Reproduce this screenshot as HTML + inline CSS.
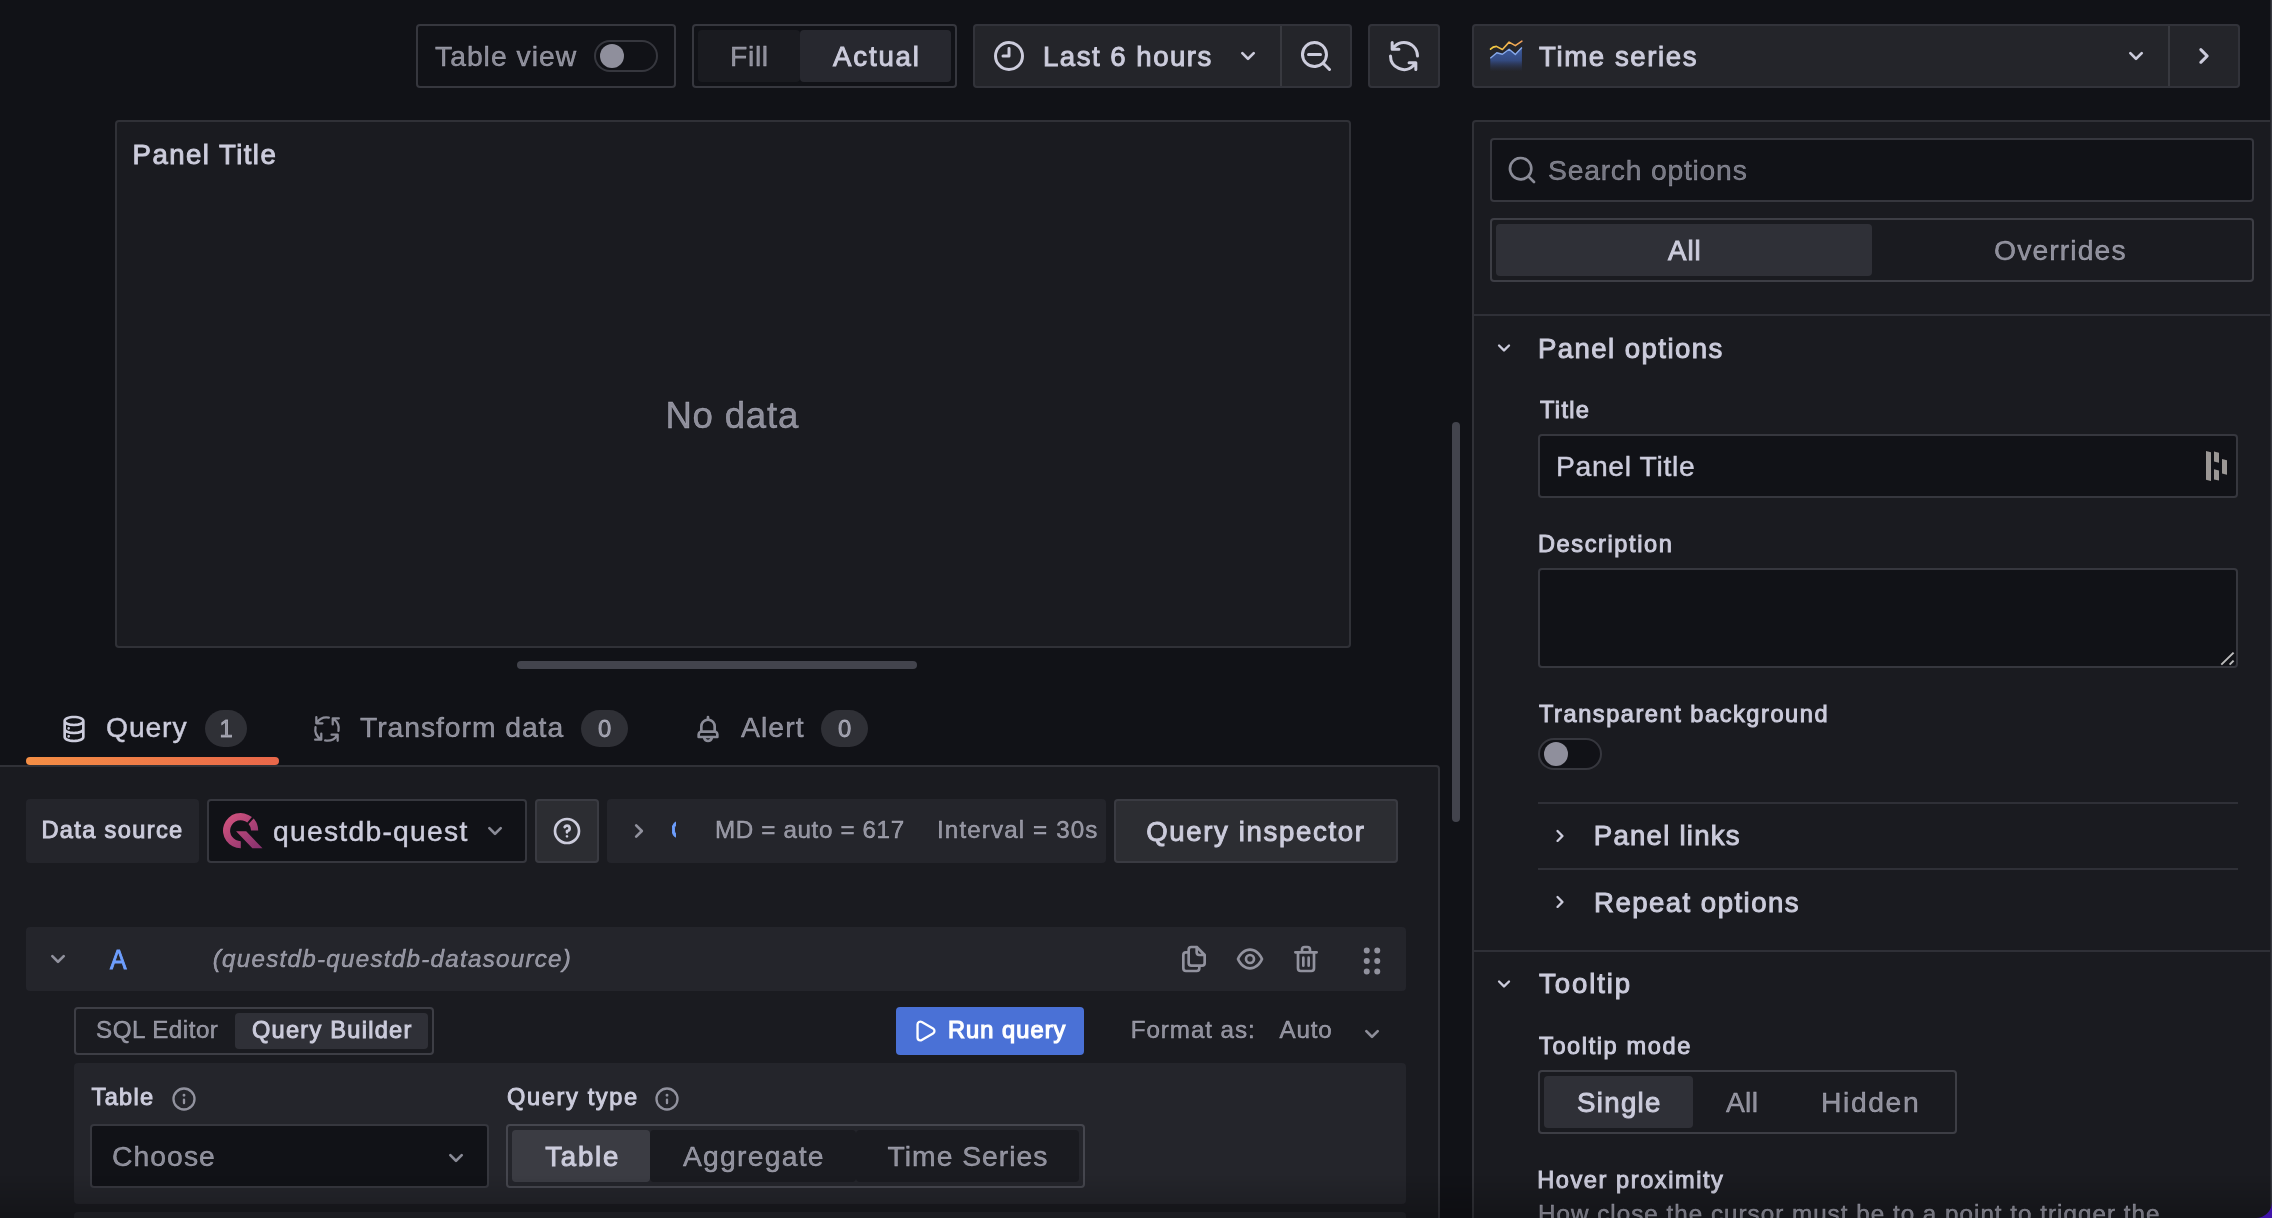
<!DOCTYPE html>
<html lang="en"><head><meta charset="utf-8"><title>Edit panel - Grafana</title>
<style>
*{box-sizing:border-box}
html,body{margin:0;padding:0;background:#111217}
body{width:2272px;height:1218px;overflow:hidden;position:relative;background:#111217;
 font-family:"Liberation Sans",sans-serif;color:#ccccdc}
.b{position:absolute}
.t{position:absolute;line-height:1;white-space:nowrap}
.ic{position:absolute;display:block}
.bd{border:2px solid rgba(204,204,220,0.2);border-radius:4px}
.btn{background:rgba(204,204,220,0.10);border:2px solid rgba(204,204,220,0.09);border-radius:4px}
.inp{background:#111217;border:2px solid rgba(204,204,220,0.2);border-radius:4px}
.sel{background:rgba(204,204,220,0.12);border-radius:4px}
.uns{background:#1a1b20;border-radius:4px}
.sec{background:#24252b;border-radius:4px}
.badge{background:rgba(204,204,220,0.16);border-radius:20px}
.sw{background:#111217;border:2px solid rgba(204,204,220,0.2);border-radius:16px}
.knob{background:#8f8f9c;border-radius:50%}
.hr{background:rgba(204,204,220,0.12)}
</style></head>
<body>
<div class="b bd" style="left:416px;top:24px;width:260px;height:64px;"></div>
<div class="b sw" style="left:594px;top:40px;width:64px;height:32px;"></div>
<div class="b knob" style="left:600px;top:44px;width:24px;height:24px;"></div>
<div class="b bd" style="left:692px;top:24px;width:265px;height:64px;"></div>
<div class="b uns" style="left:698px;top:30px;width:102px;height:52px;"></div>
<div class="b sel" style="left:800px;top:30px;width:151px;height:52px;"></div>
<div class="b btn" style="left:973px;top:24px;width:379px;height:64px;"></div>
<div class="b hr" style="left:1280px;top:26px;width:2px;height:60px;"></div>
<div class="b btn" style="left:1368px;top:24px;width:72px;height:64px;"></div>
<div class="b btn" style="left:1472px;top:24px;width:768px;height:64px;"></div>
<div class="b hr" style="left:2168px;top:26px;width:2px;height:60px;"></div>
<svg class="ic" style="left:1488px;top:38px" width="36" height="36" viewBox="1488 38 36 36">
<defs><linearGradient id="tsa" x1="0" y1="0" x2="0" y2="1"><stop offset="0" stop-color="#3e5ea3"/><stop offset="0.55" stop-color="#33497e"/><stop offset="1" stop-color="#2b3350" stop-opacity="0"/></linearGradient>
<linearGradient id="tsl" x1="0" y1="0" x2="1" y2="0"><stop offset="0" stop-color="#f2cc40"/><stop offset="1" stop-color="#f2a05a"/></linearGradient></defs>
<path d="M1490.3 58.3L1496.8 52.8L1502.4 54.2L1509.1 49.3L1515.3 54.4L1521.9 47.4V71.5H1490.3Z" fill="url(#tsa)"/>
<path d="M1490.3 58.3L1496.8 52.8L1502.4 54.2L1509.1 49.3L1515.3 54.4L1521.9 47.4" fill="none" stroke="#86a8ea" stroke-width="1.4" stroke-linejoin="round"/>
<path d="M1490.5 49.1Q1493 46.6 1496.4 46.4L1502.4 49.5L1509.1 42.1L1515.3 45.6L1521.9 41.1" fill="none" stroke="url(#tsl)" stroke-width="1.6" stroke-linejoin="round" stroke-linecap="round"/>
</svg>
<div class="b " style="left:115px;top:120px;width:1236px;height:528px;background:#1a1b20;border:2px solid rgba(204,204,220,0.13);border-radius:4px"></div>
<div class="b " style="left:517px;top:661px;width:400px;height:8px;background:#43444d;border-radius:4px"></div>
<div class="b " style="left:1452px;top:422px;width:8px;height:400px;background:#43444d;border-radius:4px"></div>
<div class="b " style="left:26px;top:757px;width:253px;height:8px;background:linear-gradient(90deg,#f48e45,#e9674a);border-radius:4px"></div>
<div class="b badge" style="left:205px;top:710px;width:42px;height:37px;"></div>
<div class="b badge" style="left:581px;top:710px;width:47px;height:37px;"></div>
<div class="b badge" style="left:821px;top:710px;width:47px;height:37px;"></div>
<div class="b " style="left:-4px;top:765px;width:1444px;height:535px;background:#1a1b20;border:2px solid rgba(204,204,220,0.13);border-radius:4px"></div>
<div class="b sec" style="left:26px;top:799px;width:173px;height:64px;"></div>
<div class="b inp" style="left:207px;top:799px;width:320px;height:64px;"></div>
<div class="b btn" style="left:535px;top:799px;width:64px;height:64px;"></div>
<div class="b sec" style="left:607px;top:799px;width:499px;height:64px;"></div>
<div class="b btn" style="left:1114px;top:799px;width:284px;height:64px;"></div>
<svg class="ic" style="left:220px;top:810px" width="46" height="42" viewBox="220 810 46 42">
<defs><linearGradient id="qg" x1="0" y1="0" x2="1" y2="1"><stop offset="0" stop-color="#d8567f"/><stop offset="1" stop-color="#85306e"/></linearGradient></defs>
<path fill="url(#qg)" d="M240.8 848.2A17.6 17.6 0 1 1 251.9 817.1L247.3 822.6A10.5 10.5 0 1 0 240.8 841.2ZM253.6 818.6A17.6 17.6 0 0 1 258.2 830.6H251.1A10.5 10.5 0 0 0 248.6 823.9ZM236.1 831.3H246.2L262.5 848.2H252.4Z"/>
</svg>
<div class="b sec" style="left:26px;top:927px;width:1380px;height:64px;"></div>
<div class="b bd" style="left:74px;top:1007px;width:360px;height:48px;"></div>
<div class="b sel" style="left:235px;top:1013px;width:193px;height:36px;"></div>
<div class="b " style="left:896px;top:1007px;width:188px;height:48px;background:#4a71d6;border-radius:4px"></div>
<div class="b sec" style="left:74px;top:1063px;width:1332px;height:141px;"></div>
<div class="b sec" style="left:74px;top:1212px;width:1332px;height:88px;"></div>
<div class="b inp" style="left:90px;top:1124px;width:399px;height:64px;"></div>
<div class="b bd" style="left:506px;top:1124px;width:579px;height:64px;"></div>
<div class="b sel" style="left:512px;top:1130px;width:138px;height:52px;background:rgba(204,204,220,0.14)"></div>
<div class="b uns" style="left:650px;top:1130px;width:206px;height:52px;"></div>
<div class="b uns" style="left:856px;top:1130px;width:223px;height:52px;"></div>
<div class="b " style="left:1472px;top:120px;width:804px;height:1180px;background:#1a1b20;border:2px solid rgba(204,204,220,0.13);border-radius:4px 0 0 0"></div>
<div class="b inp" style="left:1490px;top:138px;width:764px;height:64px;"></div>
<div class="b bd" style="left:1490px;top:218px;width:764px;height:64px;"></div>
<div class="b sel" style="left:1496px;top:224px;width:376px;height:52px;"></div>
<div class="b hr" style="left:1474px;top:314px;width:798px;height:2px;"></div>
<div class="b inp" style="left:1538px;top:434px;width:700px;height:64px;"></div>
<div class="b inp" style="left:1538px;top:568px;width:700px;height:100px;"></div>
<svg class="ic" style="left:2216px;top:648px" width="20" height="20" viewBox="2216 648 20 20"><path d="M2221.3 664.6L2233.6 652.6M2229.6 664.6L2233.6 660.6" stroke="#bdbdbd" stroke-width="2" fill="none"/></svg>
<svg class="ic" style="left:2204px;top:449px" width="26" height="34" viewBox="2204 449 26 34"><path fill="#9b9795" d="M2206 451L2211 452.2V481L2206 479.8ZM2214 451.6L2219 452.8V462.7L2214 461.5ZM2214 469.3L2219 470.5V480.6L2214 479.4ZM2222 459L2227 460.2V474.8L2222 473.6Z"/></svg>
<div class="b sw" style="left:1538px;top:738px;width:64px;height:32px;"></div>
<div class="b knob" style="left:1544px;top:742px;width:24px;height:24px;"></div>
<div class="b hr" style="left:1538px;top:802px;width:700px;height:2px;"></div>
<div class="b hr" style="left:1538px;top:868px;width:700px;height:2px;"></div>
<div class="b hr" style="left:1474px;top:950px;width:798px;height:2px;"></div>
<div class="b bd" style="left:1538px;top:1070px;width:419px;height:64px;"></div>
<div class="b sel" style="left:1544px;top:1076px;width:149px;height:52px;"></div>
<div class="b " style="left:2270px;top:0px;width:1px;height:1218px;background:#25262c"></div>
<div class="b " style="left:2271px;top:0px;width:1px;height:1218px;background:#393a41"></div>
<svg class="ic" style="left:311px;top:713px;color:rgba(204,204,220,0.65)" width="32" height="32" viewBox="0 0 24 24" fill="none" stroke="currentColor" stroke-width="1.7" stroke-linecap="round" stroke-linejoin="round">
<path d="M13.4 3.4A8.8 8.8 0 0 0 4.4 7.3M4 3.1V7.7H8.6"/><g transform="rotate(-90 12 12)"><path d="M13.4 3.4A8.8 8.8 0 0 0 4.4 7.3M4 3.1V7.7H8.6"/></g><g transform="rotate(180 12 12)"><path d="M13.4 3.4A8.8 8.8 0 0 0 4.4 7.3M4 3.1V7.7H8.6"/></g><g transform="rotate(90 12 12)"><path d="M13.4 3.4A8.8 8.8 0 0 0 4.4 7.3M4 3.1V7.7H8.6"/></g></svg>
<svg class="ic" style="left:991px;top:38px;color:#ccccdc" width="36" height="36" viewBox="0 0 24 24"><path fill="currentColor" d="M12,2A10,10,0,1,0,22,12,10.01114,10.01114,0,0,0,12,2Zm0,18a8,8,0,1,1,8-8A8.00917,8.00917,0,0,1,12,20ZM12,6a.99974.99974,0,0,0-1,1v4H8a1,1,0,0,0,0,2h4a.99974.99974,0,0,0,1-1V7A.99974.99974,0,0,0,12,6Z"/></svg>
<svg class="ic" style="left:1232px;top:40px;color:#ccccdc" width="32" height="32" viewBox="0 0 24 24"><path fill="currentColor" d="M17,9.17a1,1,0,0,0-1.41,0L12,12.71,8.46,9.17a1,1,0,0,0-1.41,0,1,1,0,0,0,0,1.42l4.24,4.24a1,1,0,0,0,1.42,0L17,10.59A1,1,0,0,0,17,9.17Z"/></svg>
<svg class="ic" style="left:1298px;top:38px;color:#ccccdc" width="36" height="36" viewBox="0 0 24 24"><path fill="currentColor" d="M21.71,20.29,18,16.61A9,9,0,1,0,16.61,18l3.68,3.68a1,1,0,0,0,1.42,0A1,1,0,0,0,21.71,20.29ZM11,18a7,7,0,1,1,7-7A7,7,0,0,1,11,18Zm4-8H7a1,1,0,0,0,0,2h8a1,1,0,0,0,0-2Z"/></svg>
<svg class="ic" style="left:1386px;top:38px;color:#ccccdc" width="36" height="36" viewBox="0 0 24 24"><path fill="currentColor" d="M19.91,15.51H15.38a1,1,0,0,0,0,2h2.4A8,8,0,0,1,4,12a1,1,0,0,0-2,0,10,10,0,0,0,16.88,7.23V21a1,1,0,0,0,2,0V16.5A1,1,0,0,0,19.91,15.51ZM12,2A10,10,0,0,0,5.12,4.77V3a1,1,0,0,0-2,0V7.5a1,1,0,0,0,1,1h4.5a1,1,0,0,0,0-2H6.22A8,8,0,0,1,20,12a1,1,0,0,0,2,0A10,10,0,0,0,12,2Z"/></svg>
<svg class="ic" style="left:2120px;top:40px;color:#ccccdc" width="32" height="32" viewBox="0 0 24 24"><path fill="currentColor" d="M17,9.17a1,1,0,0,0-1.41,0L12,12.71,8.46,9.17a1,1,0,0,0-1.41,0,1,1,0,0,0,0,1.42l4.24,4.24a1,1,0,0,0,1.42,0L17,10.59A1,1,0,0,0,17,9.17Z"/></svg>
<svg class="ic" style="left:2186px;top:38px;color:#ccccdc" width="36" height="36" viewBox="0 0 24 24"><path fill="currentColor" d="M14.83,11.29,10.59,7.05a1,1,0,0,0-1.42,0,1,1,0,0,0,0,1.41L12.71,12,9.17,15.54a1,1,0,0,0,0,1.41,1,1,0,0,0,.71.29,1,1,0,0,0,.71-.29l4.24-4.24A1,1,0,0,0,14.83,11.29Z"/></svg>
<svg class="ic" style="left:58px;top:713px;color:#ccccdc" width="32" height="32" viewBox="0 0 24 24"><path fill="currentColor" d="M8,16.5a1,1,0,1,0,1,1A1,1,0,0,0,8,16.5ZM12,2C8,2,4,3.37,4,6V18c0,2.63,4,4,8,4s8-1.37,8-4V6C20,3.37,16,2,12,2Zm6,16c0,.71-2.28,2-6,2s-6-1.29-6-2V14.73A13.16,13.16,0,0,0,12,16a13.16,13.16,0,0,0,6-1.27Zm0-6c0,.71-2.28,2-6,2s-6-1.29-6-2V8.73A13.16,13.16,0,0,0,12,10a13.16,13.16,0,0,0,6-1.27ZM12,8C8.28,8,6,6.71,6,6s2.28-2,6-2,6,1.29,6,2S15.72,8,12,8ZM8,10.5a1,1,0,1,0,1,1A1,1,0,0,0,8,10.5Z"/></svg>
<svg class="ic" style="left:692px;top:713px;color:rgba(204,204,220,0.65)" width="32" height="32" viewBox="0 0 24 24"><path fill="currentColor" d="M18,13.18V10a6,6,0,0,0-5-5.91V3a1,1,0,0,0-2,0V4.09A6,6,0,0,0,6,10v3.18A3,3,0,0,0,4,16v2a1,1,0,0,0,1,1H8.14a4,4,0,0,0,7.72,0H19a1,1,0,0,0,1-1V16A3,3,0,0,0,18,13.18ZM8,10a4,4,0,0,1,8,0v3H8Zm4,10a2,2,0,0,1-1.72-1h3.44A2,2,0,0,1,12,20Zm6-3H6V16a1,1,0,0,1,1-1H17a1,1,0,0,1,1,1Z"/></svg>
<svg class="ic" style="left:479px;top:815px;color:rgba(204,204,220,0.65)" width="32" height="32" viewBox="0 0 24 24"><path fill="currentColor" d="M17,9.17a1,1,0,0,0-1.41,0L12,12.71,8.46,9.17a1,1,0,0,0-1.41,0,1,1,0,0,0,0,1.42l4.24,4.24a1,1,0,0,0,1.42,0L17,10.59A1,1,0,0,0,17,9.17Z"/></svg>
<svg class="ic" style="left:551px;top:815px;color:#ccccdc" width="32" height="32" viewBox="0 0 24 24"><path fill="currentColor" d="M11.29,15.29a1.58,1.58,0,0,0-.12.15.76.76,0,0,0-.09.18.64.64,0,0,0-.06.18,1.36,1.36,0,0,0,0,.2.84.84,0,0,0,.08.38.9.9,0,0,0,.54.54.94.94,0,0,0,.76,0,.9.9,0,0,0,.54-.54A1,1,0,0,0,13,16a1,1,0,0,0-.29-.71A1,1,0,0,0,11.29,15.29ZM12,2A10,10,0,1,0,22,12,10,10,0,0,0,12,2Zm0,18a8,8,0,1,1,8-8A8,8,0,0,1,12,20ZM12,7A3,3,0,0,0,9.4,8.5a1,1,0,1,0,1.73,1A1,1,0,0,1,12,9a1,1,0,0,1,0,2,1,1,0,0,0-1,1v1a1,1,0,0,0,2,0v-.18A3,3,0,0,0,12,7Z"/></svg>
<svg class="ic" style="left:623px;top:815px;color:rgba(204,204,220,0.65)" width="32" height="32" viewBox="0 0 24 24"><path fill="currentColor" d="M14.83,11.29,10.59,7.05a1,1,0,0,0-1.42,0,1,1,0,0,0,0,1.41L12.71,12,9.17,15.54a1,1,0,0,0,0,1.41,1,1,0,0,0,.71.29,1,1,0,0,0,.71-.29l4.24-4.24A1,1,0,0,0,14.83,11.29Z"/></svg>
<svg class="ic" style="left:42px;top:943px;color:rgba(204,204,220,0.65)" width="32" height="32" viewBox="0 0 24 24"><path fill="currentColor" d="M17,9.17a1,1,0,0,0-1.41,0L12,12.71,8.46,9.17a1,1,0,0,0-1.41,0,1,1,0,0,0,0,1.42l4.24,4.24a1,1,0,0,0,1.42,0L17,10.59A1,1,0,0,0,17,9.17Z"/></svg>
<svg class="ic" style="left:1178px;top:943px;color:rgba(204,204,220,0.65)" width="32" height="32" viewBox="0 0 24 24"><path fill="currentColor" d="M21,8.94a1.31,1.31,0,0,0-.06-.27l0-.09a1.07,1.07,0,0,0-.19-.28h0l-6-6h0a1.07,1.07,0,0,0-.28-.19.32.32,0,0,0-.09,0A.88.88,0,0,0,14.05,2H10A3,3,0,0,0,7,5V6H6A3,3,0,0,0,3,9V19a3,3,0,0,0,3,3h8a3,3,0,0,0,3-3V18h1a3,3,0,0,0,3-3V9S21,9,21,8.94ZM15,5.41,17.59,8H16a1,1,0,0,1-1-1ZM15,19a1,1,0,0,1-1,1H6a1,1,0,0,1-1-1V9A1,1,0,0,1,6,8H7v7a3,3,0,0,0,3,3h5Zm4-4a1,1,0,0,1-1,1H10a1,1,0,0,1-1-1V5a1,1,0,0,1,1-1h3V7a3,3,0,0,0,3,3h3Z"/></svg>
<svg class="ic" style="left:1234px;top:943px;color:rgba(204,204,220,0.65)" width="32" height="32" viewBox="0 0 24 24"><path fill="currentColor" d="M21.92,11.6C19.9,6.91,16.1,4,12,4S4.1,6.91,2.08,11.6a1,1,0,0,0,0,.8C4.1,17.09,7.9,20,12,20s7.9-2.91,9.92-7.6A1,1,0,0,0,21.92,11.6ZM12,18c-3.17,0-6.17-2.29-7.9-6C5.83,8.29,8.83,6,12,6s6.17,2.29,7.9,6C18.17,15.71,15.17,18,12,18ZM12,8a4,4,0,1,0,4,4A4,4,0,0,0,12,8Zm0,6a2,2,0,1,1,2-2A2,2,0,0,1,12,14Z"/></svg>
<svg class="ic" style="left:1290px;top:943px;color:rgba(204,204,220,0.65)" width="32" height="32" viewBox="0 0 24 24"><path fill="currentColor" d="M10,18a1,1,0,0,0,1-1V11a1,1,0,0,0-2,0v6A1,1,0,0,0,10,18ZM20,6H16V5a3,3,0,0,0-3-3H11A3,3,0,0,0,8,5V6H4A1,1,0,0,0,4,8H5V19a3,3,0,0,0,3,3h8a3,3,0,0,0,3-3V8h1a1,1,0,0,0,0-2ZM10,5a1,1,0,0,1,1-1h2a1,1,0,0,1,1,1V6H10Zm7,14a1,1,0,0,1-1,1H8a1,1,0,0,1-1-1V8H17Zm-3-1a1,1,0,0,0,1-1V11a1,1,0,0,0-2,0v6A1,1,0,0,0,14,18Z"/></svg>
<svg class="ic" style="left:1354px;top:943px;color:rgba(204,204,220,0.65)" width="36" height="36" viewBox="0 0 24 24"><path fill="currentColor" d="M8.5,10a2,2,0,1,0,2,2A2,2,0,0,0,8.5,10Zm0,7a2,2,0,1,0,2,2A2,2,0,0,0,8.5,17Zm7-10a2,2,0,1,0-2-2A2,2,0,0,0,15.5,7Zm-7-4a2,2,0,1,0,2,2A2,2,0,0,0,8.5,3Zm7,14a2,2,0,1,0,2,2A2,2,0,0,0,15.5,17Zm0-7a2,2,0,1,0,2,2A2,2,0,0,0,15.5,10Z"/></svg>
<svg class="ic" style="left:912px;top:1017px;color:#ffffff" width="28" height="28" viewBox="0 0 24 24"><path fill="currentColor" d="M18.54,9,8.88,3.46a3.42,3.42,0,0,0-5.13,3V17.58A3.42,3.42,0,0,0,7.17,21a3.43,3.43,0,0,0,1.71-.46L18.54,15a3.42,3.42,0,0,0,0-5.92Zm-1,4.19L7.88,18.81a1.44,1.44,0,0,1-1.42,0,1.42,1.42,0,0,1-.71-1.23V6.420a1.42,1.42,0,0,1,.71-1.23A1.51,1.51,0,0,1,7.17,5a1.54,1.54,0,0,1,.71.19l9.66,5.58a1.42,1.42,0,0,1,0,2.46Z"/></svg>
<svg class="ic" style="left:1356px;top:1017.5px;color:rgba(204,204,220,0.65)" width="32" height="32" viewBox="0 0 24 24"><path fill="currentColor" d="M17,9.17a1,1,0,0,0-1.41,0L12,12.71,8.46,9.17a1,1,0,0,0-1.41,0,1,1,0,0,0,0,1.42l4.24,4.24a1,1,0,0,0,1.42,0L17,10.59A1,1,0,0,0,17,9.17Z"/></svg>
<svg class="ic" style="left:170px;top:1085px;color:rgba(204,204,220,0.65)" width="28" height="28" viewBox="0 0 24 24"><path fill="currentColor" d="M12,2A10,10,0,1,0,22,12,10.01114,10.01114,0,0,0,12,2Zm0,18a8,8,0,1,1,8-8A8.00917,8.00917,0,0,1,12,20Zm0-8.5a1,1,0,0,0-1,1v3a1,1,0,0,0,2,0v-3A1,1,0,0,0,12,11.5Zm0-4a1.25,1.25,0,1,0,1.25,1.25A1.25,1.25,0,0,0,12,7.5Z"/></svg>
<svg class="ic" style="left:653px;top:1085px;color:rgba(204,204,220,0.65)" width="28" height="28" viewBox="0 0 24 24"><path fill="currentColor" d="M12,2A10,10,0,1,0,22,12,10.01114,10.01114,0,0,0,12,2Zm0,18a8,8,0,1,1,8-8A8.00917,8.00917,0,0,1,12,20Zm0-8.5a1,1,0,0,0-1,1v3a1,1,0,0,0,2,0v-3A1,1,0,0,0,12,11.5Zm0-4a1.25,1.25,0,1,0,1.25,1.25A1.25,1.25,0,0,0,12,7.5Z"/></svg>
<svg class="ic" style="left:440px;top:1142px;color:rgba(204,204,220,0.65)" width="32" height="32" viewBox="0 0 24 24"><path fill="currentColor" d="M17,9.17a1,1,0,0,0-1.41,0L12,12.71,8.46,9.17a1,1,0,0,0-1.41,0,1,1,0,0,0,0,1.42l4.24,4.24a1,1,0,0,0,1.42,0L17,10.59A1,1,0,0,0,17,9.17Z"/></svg>
<svg class="ic" style="left:1506px;top:154px;color:rgba(204,204,220,0.65)" width="32" height="32" viewBox="0 0 24 24"><path fill="currentColor" d="M21.71,20.29,18,16.61A9,9,0,1,0,16.61,18l3.68,3.68a1,1,0,0,0,1.42,0A1,1,0,0,0,21.71,20.29ZM11,18a7,7,0,1,1,7-7A7,7,0,0,1,11,18Z"/></svg>
<svg class="ic" style="left:1490px;top:334px;color:#ccccdc" width="28" height="28" viewBox="0 0 24 24"><path fill="currentColor" d="M17,9.17a1,1,0,0,0-1.41,0L12,12.71,8.46,9.17a1,1,0,0,0-1.41,0,1,1,0,0,0,0,1.42l4.24,4.24a1,1,0,0,0,1.42,0L17,10.59A1,1,0,0,0,17,9.17Z"/></svg>
<svg class="ic" style="left:1545.5px;top:822px;color:#ccccdc" width="28" height="28" viewBox="0 0 24 24"><path fill="currentColor" d="M14.83,11.29,10.59,7.05a1,1,0,0,0-1.42,0,1,1,0,0,0,0,1.41L12.71,12,9.17,15.54a1,1,0,0,0,0,1.41,1,1,0,0,0,.71.29,1,1,0,0,0,.71-.29l4.24-4.24A1,1,0,0,0,14.83,11.29Z"/></svg>
<svg class="ic" style="left:1546px;top:888px;color:#ccccdc" width="28" height="28" viewBox="0 0 24 24"><path fill="currentColor" d="M14.83,11.29,10.59,7.05a1,1,0,0,0-1.42,0,1,1,0,0,0,0,1.41L12.71,12,9.17,15.54a1,1,0,0,0,0,1.41,1,1,0,0,0,.71.29,1,1,0,0,0,.71-.29l4.24-4.24A1,1,0,0,0,14.83,11.29Z"/></svg>
<svg class="ic" style="left:1490px;top:970px;color:#ccccdc" width="28" height="28" viewBox="0 0 24 24"><path fill="currentColor" d="M17,9.17a1,1,0,0,0-1.41,0L12,12.71,8.46,9.17a1,1,0,0,0-1.41,0,1,1,0,0,0,0,1.42l4.24,4.24a1,1,0,0,0,1.42,0L17,10.59A1,1,0,0,0,17,9.17Z"/></svg>
<div class="b" id="txt" style="left:0;top:0;width:2272px;height:1218px;will-change:transform">
<span class="t" id="t0" style="left:435.00px;top:42.0px;font-size:28.3px;color:rgba(204,204,220,0.65);-webkit-text-stroke:0.45px currentColor;letter-spacing:1.00px;">Table view</span>
<span class="t" id="t1" style="left:730.00px;top:42.0px;font-size:28.3px;color:rgba(204,204,220,0.65);-webkit-text-stroke:0.45px currentColor;letter-spacing:0.67px;">Fill</span>
<span class="t" id="t2" style="left:833.00px;top:42.6px;font-size:27.6px;color:#ccccdc;-webkit-text-stroke:0.95px currentColor;letter-spacing:1.84px;">Actual</span>
<span class="t" id="t3" style="left:1043.00px;top:42.6px;font-size:27.6px;color:#ccccdc;-webkit-text-stroke:0.95px currentColor;letter-spacing:1.50px;">Last 6 hours</span>
<span class="t" id="t4" style="left:1539.00px;top:42.6px;font-size:27.6px;color:#ccccdc;-webkit-text-stroke:0.95px currentColor;letter-spacing:1.60px;">Time series</span>
<span class="t" id="t5" style="left:132.60px;top:141.0px;font-size:27.6px;color:#ccccdc;-webkit-text-stroke:0.95px currentColor;letter-spacing:1.43px;">Panel Title</span>
<span class="t" id="t6" style="left:665.40px;top:397.9px;font-size:36.6px;color:rgba(204,204,220,0.65);-webkit-text-stroke:0.45px currentColor;letter-spacing:0.80px;">No data</span>
<span class="t" id="t7" style="left:106.00px;top:713.0px;font-size:28.3px;color:#ccccdc;-webkit-text-stroke:0.45px currentColor;letter-spacing:0.88px;">Query</span>
<span class="t" id="t8" style="left:360.00px;top:713.0px;font-size:28.3px;color:rgba(204,204,220,0.65);-webkit-text-stroke:0.45px currentColor;letter-spacing:0.95px;">Transform data</span>
<span class="t" id="t9" style="left:741.00px;top:713.0px;font-size:28.3px;color:rgba(204,204,220,0.65);-webkit-text-stroke:0.45px currentColor;letter-spacing:1.10px;">Alert</span>
<span class="t" id="t10" style="left:41.40px;top:818.9px;font-size:23.6px;color:#ccccdc;-webkit-text-stroke:0.95px currentColor;letter-spacing:1.36px;">Data source</span>
<span class="t" id="t11" style="left:273.00px;top:817.0px;font-size:28.3px;color:#ccccdc;-webkit-text-stroke:0.45px currentColor;letter-spacing:1.25px;">questdb-quest</span>
<span class="t" id="t12" style="left:715.00px;top:818.4px;font-size:24.2px;color:rgba(204,204,220,0.65);-webkit-text-stroke:0.45px currentColor;letter-spacing:0.64px;">MD = auto = 617</span>
<span class="t" id="t13" style="left:937.00px;top:818.4px;font-size:24.2px;color:rgba(204,204,220,0.65);-webkit-text-stroke:0.45px currentColor;letter-spacing:1.12px;">Interval = 30s</span>
<span class="t" id="t14" style="left:1146.20px;top:817.6px;font-size:27.6px;color:#ccccdc;-webkit-text-stroke:0.95px currentColor;letter-spacing:1.64px;">Query inspector</span>
<span class="t" id="t15" style="left:109.80px;top:945.8px;font-size:27.6px;color:#6e9fff;-webkit-text-stroke:0.95px currentColor;letter-spacing:-18.90px;transform:scaleX(.9);transform-origin:0 0;">A</span>
<span class="t" id="t16" style="left:212.80px;top:946.5px;font-size:24.2px;color:rgba(204,204,220,0.65);font-style:italic;-webkit-text-stroke:0.45px currentColor;letter-spacing:1.26px;">(questdb-questdb-datasource)</span>
<span class="t" id="t17" style="left:96.00px;top:1018.4px;font-size:24.2px;color:rgba(204,204,220,0.65);-webkit-text-stroke:0.45px currentColor;letter-spacing:0.50px;">SQL Editor</span>
<span class="t" id="t18" style="left:252.00px;top:1018.9px;font-size:23.6px;color:#ccccdc;-webkit-text-stroke:0.95px currentColor;letter-spacing:1.25px;">Query Builder</span>
<span class="t" id="t19" style="left:948.00px;top:1018.9px;font-size:23.6px;color:#ffffff;-webkit-text-stroke:1.2px currentColor;letter-spacing:1.07px;">Run query</span>
<span class="t" id="t20" style="left:1130.80px;top:1018.4px;font-size:24.2px;color:rgba(204,204,220,0.65);-webkit-text-stroke:0.45px currentColor;letter-spacing:0.92px;">Format as:</span>
<span class="t" id="t21" style="left:1279.60px;top:1018.4px;font-size:24.2px;color:rgba(204,204,220,0.65);-webkit-text-stroke:0.45px currentColor;letter-spacing:0.77px;">Auto</span>
<span class="t" id="t22" style="left:91.60px;top:1086.0px;font-size:23.6px;color:#ccccdc;-webkit-text-stroke:0.95px currentColor;letter-spacing:1.30px;">Table</span>
<span class="t" id="t23" style="left:112.00px;top:1142.0px;font-size:28.3px;color:rgba(204,204,220,0.65);-webkit-text-stroke:0.45px currentColor;letter-spacing:1.06px;">Choose</span>
<span class="t" id="t24" style="left:507.00px;top:1086.0px;font-size:23.6px;color:#ccccdc;-webkit-text-stroke:0.95px currentColor;letter-spacing:1.64px;">Query type</span>
<span class="t" id="t25" style="left:545.20px;top:1142.6px;font-size:27.6px;color:#ccccdc;-webkit-text-stroke:0.95px currentColor;letter-spacing:1.78px;">Table</span>
<span class="t" id="t26" style="left:683.00px;top:1142.0px;font-size:28.3px;color:rgba(204,204,220,0.65);-webkit-text-stroke:0.45px currentColor;letter-spacing:1.25px;">Aggregate</span>
<span class="t" id="t27" style="left:887.60px;top:1142.0px;font-size:28.3px;color:rgba(204,204,220,0.65);-webkit-text-stroke:0.45px currentColor;letter-spacing:0.98px;">Time Series</span>
<span class="t" id="t28" style="left:1548.00px;top:156.0px;font-size:28.3px;color:rgba(204,204,220,0.55);-webkit-text-stroke:0.45px currentColor;letter-spacing:0.77px;">Search options</span>
<span class="t" id="t29" style="left:1668.00px;top:236.6px;font-size:27.6px;color:#ccccdc;-webkit-text-stroke:0.95px currentColor;letter-spacing:1.00px;">All</span>
<span class="t" id="t30" style="left:1994.00px;top:236.0px;font-size:28.3px;color:rgba(204,204,220,0.65);-webkit-text-stroke:0.45px currentColor;letter-spacing:1.12px;">Overrides</span>
<span class="t" id="t31" style="left:1538.00px;top:334.5px;font-size:27.6px;color:#ccccdc;-webkit-text-stroke:0.95px currentColor;letter-spacing:1.42px;">Panel options</span>
<span class="t" id="t32" style="left:1540.00px;top:398.9px;font-size:23.6px;color:#ccccdc;-webkit-text-stroke:0.95px currentColor;letter-spacing:1.32px;">Title</span>
<span class="t" id="t33" style="left:1556.00px;top:451.8px;font-size:28.3px;color:#ccccdc;-webkit-text-stroke:0.45px currentColor;letter-spacing:0.65px;">Panel Title</span>
<span class="t" id="t34" style="left:1538.00px;top:533.1px;font-size:23.6px;color:#ccccdc;-webkit-text-stroke:0.95px currentColor;letter-spacing:1.58px;">Description</span>
<span class="t" id="t35" style="left:1539.00px;top:703.1px;font-size:23.6px;color:#ccccdc;-webkit-text-stroke:0.95px currentColor;letter-spacing:1.54px;">Transparent background</span>
<span class="t" id="t36" style="left:1593.80px;top:822.4px;font-size:27.6px;color:#ccccdc;-webkit-text-stroke:0.95px currentColor;letter-spacing:1.23px;">Panel links</span>
<span class="t" id="t37" style="left:1594.00px;top:888.5px;font-size:27.6px;color:#ccccdc;-webkit-text-stroke:0.95px currentColor;letter-spacing:1.46px;">Repeat options</span>
<span class="t" id="t38" style="left:1539.00px;top:970.4px;font-size:27.6px;color:#ccccdc;-webkit-text-stroke:0.95px currentColor;letter-spacing:1.90px;">Tooltip</span>
<span class="t" id="t39" style="left:1539.00px;top:1034.7px;font-size:23.6px;color:#ccccdc;-webkit-text-stroke:0.95px currentColor;letter-spacing:1.59px;">Tooltip mode</span>
<span class="t" id="t40" style="left:1577.00px;top:1088.6px;font-size:27.6px;color:#ccccdc;-webkit-text-stroke:0.95px currentColor;letter-spacing:1.34px;">Single</span>
<span class="t" id="t41" style="left:1726.00px;top:1088.0px;font-size:28.3px;color:rgba(204,204,220,0.65);-webkit-text-stroke:0.45px currentColor;letter-spacing:0.25px;">All</span>
<span class="t" id="t42" style="left:1821.00px;top:1088.0px;font-size:28.3px;color:rgba(204,204,220,0.65);-webkit-text-stroke:0.45px currentColor;letter-spacing:1.60px;">Hidden</span>
<span class="t" id="t43" style="left:1537.20px;top:1169.0px;font-size:23.6px;color:#ccccdc;-webkit-text-stroke:0.95px currentColor;letter-spacing:1.56px;">Hover proximity</span>
<span class="t" id="t44" style="left:1538.00px;top:1202.0px;font-size:24.2px;color:rgba(204,204,220,0.65);-webkit-text-stroke:0.45px currentColor;letter-spacing:1.02px;">How close the cursor must be to a point to trigger the</span>
<span class="t" style="left:206px;width:40px;text-align:center;top:716.6px;font-size:23.8px;color:rgba(204,204,220,0.65);-webkit-text-stroke:0.8px currentColor">1</span>
<span class="t" style="left:584.5px;width:40px;text-align:center;top:716.6px;font-size:23.8px;color:rgba(204,204,220,0.65);-webkit-text-stroke:0.8px currentColor">0</span>
<span class="t" style="left:824.5px;width:40px;text-align:center;top:716.6px;font-size:23.8px;color:rgba(204,204,220,0.65);-webkit-text-stroke:0.8px currentColor">0</span>
<div class="b" style="left:672.4px;top:815px;width:3.2px;height:30px;overflow:hidden"><span class="t" style="left:-1.5px;top:3.9px;font-size:23.6px;color:#6e9fff;-webkit-text-stroke:0.95px currentColor">Query options</span></div>
</div>
<div class="b " style="left:0px;top:1176px;width:2272px;height:42px;background:linear-gradient(rgba(0,0,0,0),rgba(0,0,0,0.22))"></div>
<svg class="ic" style="left:2256px;top:1202px" width="16" height="16" viewBox="0 0 16 16"><path d="M16 0V16H0A16 16 0 0 0 16 0Z" fill="#3f12a8"/></svg>
</body></html>
